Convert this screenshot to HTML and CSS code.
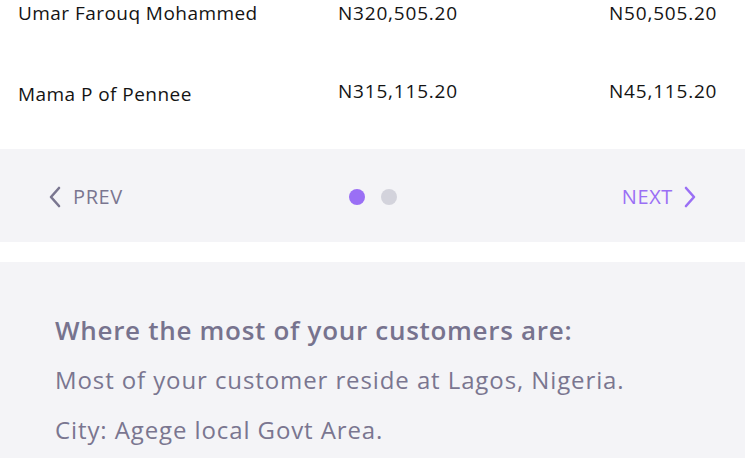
FILE: index.html
```html
<!DOCTYPE html>
<html>
<head>
<meta charset="utf-8">
<link rel="stylesheet" href="styles.css">
</head>
<body>
<div class="table">
  <div class="row">
    <span class="name">Umar Farouq Mohammed</span>
    <span class="amt">N320,505.20</span>
    <span class="amt">N50,505.20</span>
  </div>
  <div class="row">
    <span class="name low">Mama P of Pennee</span>
    <span class="amt">N315,115.20</span>
    <span class="amt">N45,115.20</span>
  </div>
</div>
<div class="pager">
  <a class="btn prev">
    <svg width="14" height="22" viewBox="0 0 14 22"><path d="M11 2 L3 11 L11 20" fill="none" stroke="currentColor" stroke-width="2.6" stroke-linecap="round" stroke-linejoin="round"/></svg>
    <span>PREV</span>
  </a>
  <div class="dots"><span class="dot on"></span><span class="dot"></span></div>
  <a class="btn next">
    <span>NEXT</span>
    <svg width="14" height="22" viewBox="0 0 14 22"><path d="M3 2 L11 11 L3 20" fill="none" stroke="currentColor" stroke-width="2.6" stroke-linecap="round" stroke-linejoin="round"/></svg>
  </a>
</div>
<div class="info">
  <h2>Where the most of your customers are:</h2>
  <p>Most of your customer reside at Lagos, Nigeria.</p>
  <p>City: Agege local Govt Area.</p>
</div>
</body>
</html>
```
FILE: styles.css
```css
* { box-sizing: border-box; }
html, body { margin: 0; padding: 0; background: #fff; }
body { font-family: "Open Sans", Lato, sans-serif; width: 745px; overflow: hidden; }
.table { padding-top: 0; height: 149px; }
.row {
  display: grid;
  grid-template-columns: 320px 271px 1fr;
  padding-left: 18px;
  height: 78px;
  font-size: 19px;
  line-height: 26px;
  color: #141414;
}
.name { letter-spacing: 0.45px; }
.amt { letter-spacing: 0.8px; }
.name.low { padding-top: 3px; }
.pager {
  background: #f4f4f7;
  height: 93px;
  display: flex;
  align-items: center;
  justify-content: space-between;
  padding: 2px 48px 0 48px;
}
.btn { display: flex; align-items: center; gap: 11px; font-size: 20px; letter-spacing: 0.6px; }
.prev { color: #7a7690; }
.next { color: #9a6ff5; }
.next span { margin-right: -1px; }
.dots { display: flex; gap: 16px; margin-left: 2px; }
.dot { width: 16px; height: 16px; border-radius: 50%; background: #d3d3dc; }
.dot.on { background: #9a6ff5; }
.info {
  margin-top: 20px;
  background: #f4f4f7;
  height: 200px;
  padding: 51px 55px 0 55px;
  color: #7a7690;
}
.info h2 { margin: 0 0 16px; font-size: 26px; font-weight: 600; line-height: 34px; letter-spacing: 0.7px; color: #77738e; }
.info p { margin: 0 0 16px; font-size: 24px; line-height: 34px; letter-spacing: 0.9px; }
```
